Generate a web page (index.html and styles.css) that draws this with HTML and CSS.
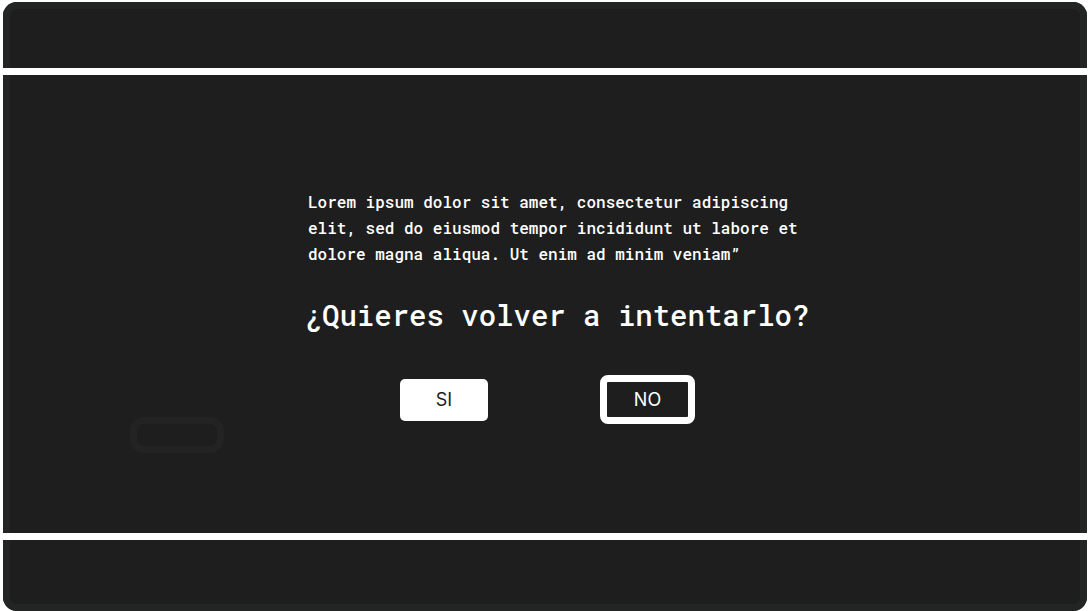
FILE: index.html
```html
<!DOCTYPE html>
<html lang="es">
<head>
  <meta charset="utf-8">
  <meta name="viewport" content="width=device-width, initial-scale=1">
  <title>Volver a intentarlo</title>
  <link rel="stylesheet" href="styles.css">
</head>
<body>
  <div class="frame">
    <header class="bar"></header>
    <main class="stage">
      <div class="ghost" aria-hidden="true"></div>
      <section class="dialog">
        <p class="message">Lorem ipsum dolor sit amet, consectetur adipiscing elit, sed do eiusmod tempor incididunt ut labore et dolore magna aliqua. Ut enim ad minim veniam”</p>
        <h1 class="question">¿Quieres volver a intentarlo?</h1>
        <div class="actions">
          <button class="button button-solid" type="button">SI</button>
          <button class="button button-outline" type="button">NO</button>
        </div>
      </section>
    </main>
    <footer class="bar"></footer>
  </div>
</body>
</html>
```
FILE: styles.css
```css
* {
  box-sizing: border-box;
}

body {
  margin: 0;
  background: #fff;
}

.frame {
  display: flex;
  flex-direction: column;
  min-height: calc(100vh - 2px);
  margin: 2px 1px 0 3px;
  border-radius: 14px;
  background: #1e1e1e;
  box-shadow: inset 0 0 0 7px #232424;
}

.bar {
  height: 66px;
}

.stage {
  flex: 1;
  display: grid;
  grid-template-columns: 301fr 506px 277fr;
  align-content: start;
  padding: 114px 0 79px;
  border: solid #fff;
  border-width: 7px 0;
}

.bar:last-child {
  height: 71px;
}

.ghost {
  align-self: end;
  width: 94px;
  height: 36px;
  margin: 0 0 -29px 127px;
  border: 7px solid #232323;
  border-radius: 14px;
}

.dialog {
  color: #fff;
  font-family: "Roboto Mono", "DejaVu Sans Mono", monospace;
}

.message {
  margin: 0;
  padding: 0 4px;
  font-size: 16px;
  font-weight: 500;
  line-height: 26px;
}

.question {
  margin: 28px 0 0;
  font-size: 29px;
  font-weight: 500;
  line-height: 40px;
  text-align: center;
  white-space: nowrap;
}

.actions {
  display: flex;
  justify-content: center;
  align-items: center;
  gap: 112px;
  margin-top: 40px;
  padding-right: 19px;
}

.button {
  padding: 0;
  border: 0;
  font-family: Inter, sans-serif;
  font-size: 18px;
  cursor: pointer;
}

.button-solid {
  width: 88px;
  height: 42px;
  border-radius: 5px;
  background: #fff;
  color: #1e1e1e;
}

.button-outline {
  width: 95px;
  height: 49px;
  border: 7px solid #fff;
  border-radius: 8px;
  background: transparent;
  color: #fff;
}
```
